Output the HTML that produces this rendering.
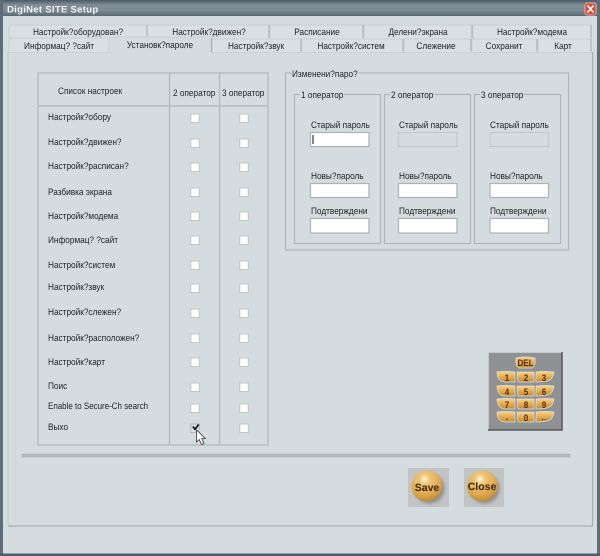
<!DOCTYPE html>
<html><head><meta charset="utf-8"><style>
html,body{margin:0;padding:0;width:600px;height:556px;overflow:hidden;background:#d5dcdf}
svg{display:block}
text{font-family:"Liberation Sans",sans-serif;font-size:9.4px;fill:#1e2224;text-rendering:geometricPrecision;transform-box:fill-box;transform-origin:0 50%;transform:scaleX(.88)}
text.m{text-anchor:middle;transform-origin:50% 50%}
.ln{fill:none;stroke:#adb7bb;stroke-width:1.2}
.cb{fill:#fdfefe;stroke:#bfc7ca;stroke-width:1}
.in{fill:#fff;stroke:#aab4b8;stroke-width:1.2}
.dis{fill:#d5dcdf;stroke:#c0c8cb;stroke-width:1.2}
text.k{font-size:9.5px;font-weight:bold;fill:#54300a;text-anchor:middle;transform-origin:50% 50%;transform:scaleX(.85)}
text.b{font-size:10.500px;font-weight:bold;fill:#3e2206;text-anchor:middle;transform:none}
</style></head><body>
<svg width="600" height="556" viewBox="0 0 600 556" xmlns="http://www.w3.org/2000/svg">
<defs>
<linearGradient id="tb" x1="0" y1="0" x2="0" y2="1"><stop offset="0" stop-color="#4a5a66"/><stop offset=".3" stop-color="#7f8c95"/><stop offset=".65" stop-color="#7d8a93"/><stop offset="1" stop-color="#5a6872"/></linearGradient>
<linearGradient id="kb" x1="0" y1="0" x2="0" y2="1"><stop offset="0" stop-color="#f6d48e"/><stop offset=".45" stop-color="#eab055"/><stop offset="1" stop-color="#c48a33"/></linearGradient>
<radialGradient id="ball" cx=".42" cy=".28" r=".8"><stop offset="0" stop-color="#fff4d6"/><stop offset=".22" stop-color="#eec576"/><stop offset=".65" stop-color="#dca64e"/><stop offset="1" stop-color="#b17f30"/></radialGradient>
<filter id="s" x="0" y="0" width="100%" height="100%"><feGaussianBlur stdDeviation="0.35"/></filter>
<filter id="sh" x="-30%" y="-30%" width="160%" height="160%"><feGaussianBlur stdDeviation="1.500"/></filter>
</defs>
<g filter="url(#s)">
<rect width="600" height="556" fill="#d5dcdf"/>
<rect width="600" height="16" fill="url(#tb)"/>
<rect x="0" y="0" width="3" height="556" fill="#5e6c77"/>
<rect x="597" y="0" width="3" height="556" fill="#5e6c77"/>
<rect x="0" y="553.500" width="600" height="2.500" fill="#4f5d69"/>
<text x="7" y="12.500" style="font-size:9.500px;font-weight:bold;letter-spacing:.3px;fill:#f2f4f5;transform:none">DigiNet SITE Setup</text>
<rect x="585" y="3" width="11" height="12" rx="2" fill="#d9503c" stroke="#f0c8c0" stroke-width=".7"/>
<path d="M587.500 5.500l6 7M593.500 5.500l-6 7" stroke="#fff" stroke-width="1.600"/>

<!-- tab row 1 -->
<g fill="#d9dfe2" stroke="#c8d0d3" stroke-width="1">
<path d="M9 39V27l2-2H147V39"/><path d="M147 39V25H269V39"/><path d="M270 39V25H363V39"/><path d="M364 39V25H472V39"/><path d="M473 39V25H591V39"/>
</g>
<path d="M147 25V38M269 25V38M363 25V38M472 25V38M591 25V38" stroke="#a3adb1" stroke-width="1"/>
<text class="m" x="78" y="35">Настройк?оборудован?</text>
<text class="m" x="209" y="35">Настройк?движен?</text>
<text class="m" x="317" y="35">Расписание</text>
<text class="m" x="418" y="35">Делени?экрана</text>
<text class="m" x="532" y="35">Настройк?модема</text>
<!-- panel -->
<rect x="8" y="52" width="584.500" height="474" fill="#d5dcdf"/>
<path d="M8 526V52H592" fill="none" stroke="#bec7ca" stroke-width="1"/>
<path d="M592.500 52V526H8" fill="none" stroke="#a3aeb2" stroke-width="1.200"/>
<!-- tab row 2 -->
<g fill="#d9dfe2" stroke="#c8d0d3" stroke-width="1">
<path d="M9 52V40l2-2H109V52"/><path d="M212 52V39H301V52"/><path d="M302 52V39H403V52"/><path d="M404 52V39H471V52"/><path d="M472 52V39H537V52"/><path d="M538 52V39H591V52"/>
</g>
<path d="M301 39V51M403 39V51M471 39V51M537 39V51M591 39V51" stroke="#a3adb1" stroke-width="1"/>
<path d="M109 53V38l2-1H210l1 1V53H109z" fill="#d5dcdf"/>
<path d="M109 52V38l2-1H210" fill="none" stroke="#c8d0d3"/>
<path d="M211.500 38V52" stroke="#a3adb1"/>
<text class="m" x="59" y="49">Информац? ?сайт</text>
<text class="m" x="160" y="48">Установк?пароле</text>
<text class="m" x="256" y="49">Настройк?звук</text>
<text class="m" x="351" y="49">Настройк?систем</text>
<text class="m" x="436" y="49">Слежение</text>
<text class="m" x="504" y="49">Сохранит</text>
<text class="m" x="563" y="49">Карт</text>

<!-- table -->
<rect class="ln" x="38" y="73" width="230" height="372"/>
<path class="ln" d="M169.500 73V445M219.500 73V445M38 106H268"/>
<text x="58" y="94">Список настроек</text>
<text x="173" y="96">2 оператор</text>
<text x="222" y="96">3 оператор</text>
<text x="48" y="120">Настройк?обору</text>
<text x="48" y="145">Настройк?движен?</text>
<text x="48" y="169">Настройк?расписан?</text>
<text x="48" y="195">Разбивка экрана</text>
<text x="48" y="219">Настройк?модема</text>
<text x="48" y="243">Информац? ?сайт</text>
<text x="48" y="268">Настройк?систем</text>
<text x="48" y="290">Настройк?звук</text>
<text x="48" y="315">Настройк?слежен?</text>
<text x="48" y="341">Настройк?расположен?</text>
<text x="48" y="365">Настройк?карт</text>
<text x="48" y="389">Поис</text>
<text x="48" y="409" style="transform:scaleX(.85)">Enable to Secure-Ch search</text>
<text x="48" y="430">Выхо</text>
<g transform="translate(-.7,-.5)">
<rect class="cb" x="191.500" y="114.500" width="8.500" height="8.500"/><rect class="cb" x="240.500" y="114.500" width="8.500" height="8.500"/>
<rect class="cb" x="191.500" y="139.500" width="8.500" height="8.500"/><rect class="cb" x="240.500" y="139.500" width="8.500" height="8.500"/>
<rect class="cb" x="191.500" y="163.500" width="8.500" height="8.500"/><rect class="cb" x="240.500" y="163.500" width="8.500" height="8.500"/>
<rect class="cb" x="191.500" y="188.500" width="8.500" height="8.500"/><rect class="cb" x="240.500" y="188.500" width="8.500" height="8.500"/>
<rect class="cb" x="191.500" y="212.500" width="8.500" height="8.500"/><rect class="cb" x="240.500" y="212.500" width="8.500" height="8.500"/>
<rect class="cb" x="191.500" y="236.500" width="8.500" height="8.500"/><rect class="cb" x="240.500" y="236.500" width="8.500" height="8.500"/>
<rect class="cb" x="191.500" y="261.500" width="8.500" height="8.500"/><rect class="cb" x="240.500" y="261.500" width="8.500" height="8.500"/>
<rect class="cb" x="191.500" y="284.500" width="8.500" height="8.500"/><rect class="cb" x="240.500" y="284.500" width="8.500" height="8.500"/>
<rect class="cb" x="191.500" y="309.500" width="8.500" height="8.500"/><rect class="cb" x="240.500" y="309.500" width="8.500" height="8.500"/>
<rect class="cb" x="191.500" y="334.500" width="8.500" height="8.500"/><rect class="cb" x="240.500" y="334.500" width="8.500" height="8.500"/>
<rect class="cb" x="191.500" y="358.500" width="8.500" height="8.500"/><rect class="cb" x="240.500" y="358.500" width="8.500" height="8.500"/>
<rect class="cb" x="191.500" y="383.500" width="8.500" height="8.500"/><rect class="cb" x="240.500" y="383.500" width="8.500" height="8.500"/>
<rect class="cb" x="191.500" y="404.500" width="8.500" height="8.500"/><rect class="cb" x="240.500" y="404.500" width="8.500" height="8.500"/>
<rect x="191.500" y="424.500" width="8.500" height="8.500" fill="#dde2e4" stroke="#b0b9bc"/><rect class="cb" x="240.500" y="424.500" width="8.500" height="8.500"/>
</g>
<path d="M192.800 426.500l2.200 2.800 3.700-4.800" fill="none" stroke="#111" stroke-width="1.700"/>
<path d="M196.500 430V442l2.700-2.500 2.300 5 2.500-1-2.300-5h3.600z" fill="#fff" stroke="#333" stroke-width=".8"/>

<!-- separator -->
<rect x="22" y="454" width="548" height="3" fill="#b1bbbf" stroke="#a5afb3" stroke-width=".5"/>

<!-- password groups -->
<rect class="ln" x="285.500" y="73" width="283" height="177"/>
<rect x="291" y="68" width="68" height="10" fill="#d5dcdf"/>
<text x="292" y="77">Изменени?паро?</text>
<rect class="ln" x="294.500" y="94.500" width="86" height="149"/>
<rect class="ln" x="384.500" y="94.500" width="86" height="149"/>
<rect class="ln" x="474.500" y="94.500" width="86" height="149"/>
<rect x="300" y="90" width="44" height="9" fill="#d5dcdf"/>
<rect x="390" y="90" width="44" height="9" fill="#d5dcdf"/>
<rect x="480" y="90" width="44" height="9" fill="#d5dcdf"/>
<text x="301" y="98">1 оператор</text>
<text x="391" y="98">2 оператор</text>
<text x="481" y="98">3 оператор</text>

<text x="311" y="128">Старый пароль</text>
<text x="399" y="128">Старый пароль</text>
<text x="490" y="128">Старый пароль</text>
<rect class="in" x="310.500" y="132.500" width="58.500" height="14"/>
<path d="M313 135V144" stroke="#111" stroke-width="1"/>
<rect class="dis" x="398.500" y="132.500" width="58.500" height="14"/>
<rect class="dis" x="490" y="132.500" width="58.500" height="14"/>

<text x="311" y="179">Новы?пароль</text>
<text x="399" y="179">Новы?пароль</text>
<text x="490" y="179">Новы?пароль</text>
<rect class="in" x="310.500" y="183.500" width="58.500" height="14"/>
<rect class="in" x="398.500" y="183.500" width="58.500" height="14"/>
<rect class="in" x="490" y="183.500" width="58.500" height="14"/>

<text x="311" y="214">Подтверждени</text>
<text x="399" y="214">Подтверждени</text>
<text x="490" y="214">Подтверждени</text>
<rect class="in" x="310.500" y="218.500" width="58.500" height="14.500"/>
<rect class="in" x="398.500" y="218.500" width="58.500" height="14.500"/>
<rect class="in" x="490" y="218.500" width="58.500" height="14.500"/>

<!-- keypad -->
<rect x="488" y="352" width="74" height="78" fill="#8f9293"/>
<path d="M488 430V352H562" fill="none" stroke="#d6d9da" stroke-width="1.500"/>
<path d="M562 352V430H488" fill="none" stroke="#55595b" stroke-width="1.500"/>
<g fill="url(#kb)" stroke="#dfe3e3" stroke-width=".7">
<path d="M516 358q9-2 19 0q1 7-3 10h-13q-4-3-3-10z"/>
<path d="M497 372q9-1 18 0v10h-11q-7-2-7-10z"/><path d="M517 372h17v10h-16z"/><path d="M536 372q9-1 18 0q-1 8-7 9q-5 1-11 1z"/>
<path d="M497 386q9-1 18 0v10h-11q-7-2-7-10z"/><path d="M517 386h17v10h-16z"/><path d="M536 386q9-1 18 0q-1 8-7 9q-5 1-11 1z"/>
<path d="M497 399q9-1 18 0v10h-11q-7-2-7-10z"/><path d="M517 399h17v10h-16z"/><path d="M536 399q9-1 18 0q-1 8-7 9q-5 1-11 1z"/>
<path d="M497 412q9-1 18 0v10h-11q-7-2-7-10z"/><path d="M517 412h17v10h-16z"/><path d="M536 412q9-1 18 0q-1 8-7 9q-5 1-11 1z"/>
</g>
<text class="k" x="525.500" y="366">DEL</text>
<text class="k" x="507" y="381">1</text><text class="k" x="526" y="381">2</text><text class="k" x="544" y="381">3</text>
<text class="k" x="507" y="395">4</text><text class="k" x="526" y="395">5</text><text class="k" x="544" y="395">6</text>
<text class="k" x="507" y="408">7</text><text class="k" x="526" y="408">8</text><text class="k" x="544" y="408">9</text>
<text class="k" x="507" y="420">.</text><text class="k" x="526" y="421">0</text><text class="k" x="544" y="421">←</text>

<!-- buttons -->
<rect x="408" y="468" width="41" height="39" fill="#c0c4c5"/>
<rect x="464" y="468" width="40" height="39" fill="#c0c4c5"/>
<circle cx="429.500" cy="488.500" r="15" fill="#7f8384" opacity=".8" filter="url(#sh)"/>
<circle cx="484.500" cy="488.500" r="15" fill="#7f8384" opacity=".8" filter="url(#sh)"/>
<circle cx="427" cy="486" r="15.500" fill="url(#ball)"/>
<circle cx="482.500" cy="486" r="15.500" fill="url(#ball)"/>
<text class="b" x="427" y="491">Save</text>
<text class="b" x="482" y="490">Close</text>
</g>
</svg>
</body></html>
